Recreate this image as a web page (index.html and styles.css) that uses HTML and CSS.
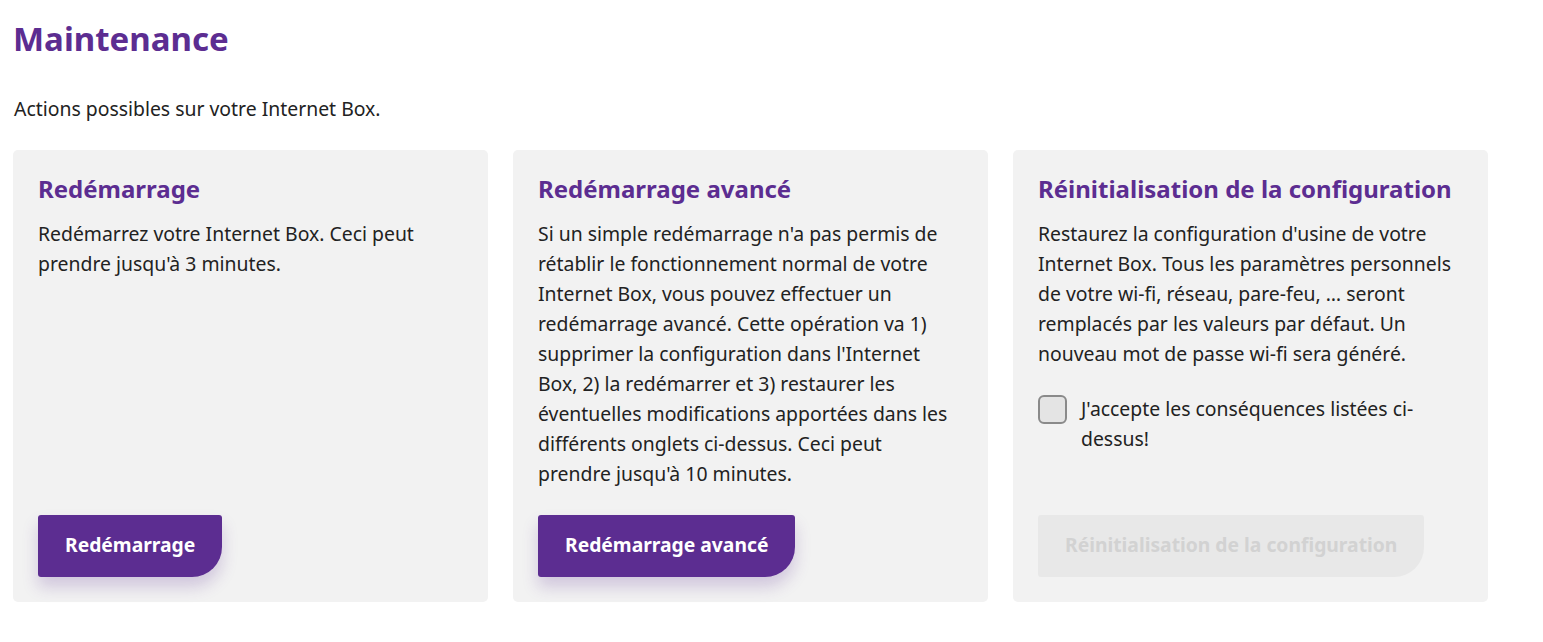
FILE: index.html
```html
<!DOCTYPE html>
<html lang="fr">
<head>
<meta charset="utf-8">
<link rel="stylesheet" href="styles.css">
</head>
<body>
<main class="page">
  <h1 class="title">Maintenance</h1>
  <p class="intro">Actions possibles sur votre Internet Box.</p>
  <div class="cards">
    <section class="card">
      <h2 class="card-title">Redémarrage</h2>
      <p class="card-text">Redémarrez votre Internet Box. Ceci peut prendre jusqu'à 3 minutes.</p>
      <button class="btn">Redémarrage</button>
    </section>
    <section class="card">
      <h2 class="card-title">Redémarrage avancé</h2>
      <p class="card-text">Si un simple redémarrage n'a pas permis de rétablir le fonctionnement normal de votre Internet Box, vous pouvez effectuer un redémarrage avancé. Cette opération va 1) supprimer la configuration dans l'Internet Box, 2) la redémarrer et 3) restaurer les éventuelles modifications apportées dans les différents onglets ci-dessus. Ceci peut prendre jusqu'à 10 minutes.</p>
      <button class="btn">Redémarrage avancé</button>
    </section>
    <section class="card">
      <h2 class="card-title">Réinitialisation de la configuration</h2>
      <p class="card-text">Restaurez la configuration d'usine de votre Internet Box. Tous les paramètres personnels de votre wi-fi, réseau, pare-feu, … seront remplacés par les valeurs par défaut. Un nouveau mot de passe wi-fi sera généré.</p>
      <label class="check">
        <span class="box"></span>
        <span class="check-label">J'accepte les conséquences listées ci-dessus!</span>
      </label>
      <button class="btn btn-disabled" disabled>Réinitialisation de la configuration</button>
    </section>
  </div>
</main>
</body>
</html>
```

FILE: styles.css
```css
* { box-sizing: border-box; }
body {
  margin: 0;
  background: #fff;
  font-family: "Noto Sans", "Open Sans", sans-serif;
  color: #222;
}
.page {
  padding: 14px 13px;
}
.title {
  margin: 0;
  font-size: 33px;
  font-weight: 700;
  color: #5c2d91;
  line-height: 50px;
}
.intro {
  margin: 35px 0 0 1px;
  font-size: 19.4px;
  line-height: 20px;
}
.cards {
  display: flex;
  gap: 25px;
  margin-top: 31px;
}
.card {
  width: 475px;
  height: 452px;
  background: #f2f2f2;
  border-radius: 5px;
  padding: 24px 25px 25px;
  display: flex;
  flex-direction: column;
  align-items: flex-start;
}
.card-title {
  margin: 0;
  font-size: 24px;
  font-weight: 700;
  color: #5c2d91;
  line-height: 30px;
}
.card-text {
  margin: 15px 0 0;
  max-width: 418px;
  font-size: 19.4px;
  line-height: 30px;
  color: #222;
}
.check {
  display: flex;
  align-items: flex-start;
  gap: 14px;
  margin-top: 25px;
  width: 400px;
}
.box {
  flex: none;
  width: 29px;
  height: 29px;
  border: 2px solid #8a8a8a;
  border-radius: 6px;
  background: #e4e4e4;
  margin-top: 1px;
}
.check-label {
  font-size: 19.4px;
  line-height: 30px;
}
.btn {
  margin-top: auto;
  height: 62px;
  padding: 0 27px 3px;
  border: none;
  border-radius: 3px 3px 30px 3px;
  background: #5c2d91;
  color: #fff;
  font-family: inherit;
  font-size: 19.3px;
  font-weight: 700;
  box-shadow: 0 10px 16px rgba(92, 45, 145, 0.22);
}
.btn-disabled {
  background: #e8e8e8;
  color: #d2d2d2;
  box-shadow: none;
}
```
